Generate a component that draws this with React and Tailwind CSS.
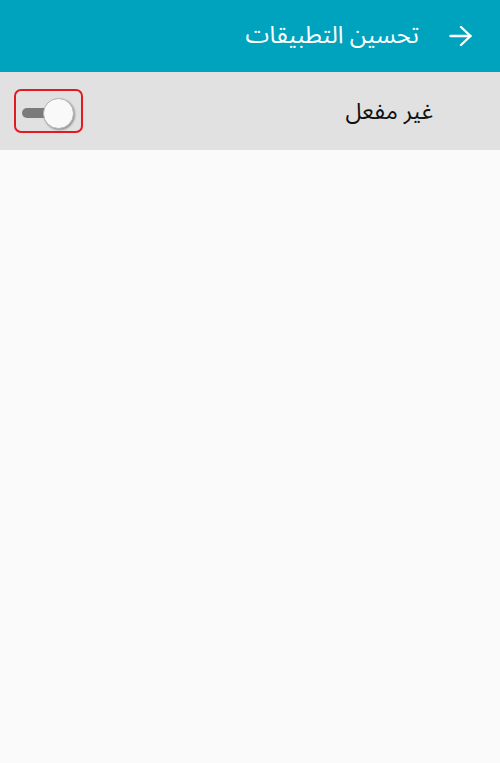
export default function App() {
  return (
    <div dir="rtl" className="w-[500px] h-[763px] bg-[#fafafa] flex flex-col" style={{ fontFamily: '"Noto Sans Arabic", "DejaVu Sans", "Noto Sans", sans-serif' }}>
      <div className="h-[72px] bg-[#00a3be] flex items-center shrink-0 pr-[28px]">
        <svg className="shrink-0" width="23" height="22" viewBox="0 0 23 22" fill="none" stroke="#ffffff" strokeWidth="2.4" strokeLinecap="round" strokeLinejoin="round">
          <path d="M1.5 11H21.5" />
          <path d="M12 2L21.5 11L12 20" />
        </svg>
        <span className="mr-[30px] text-[24px] text-white leading-none">تحسين التطبيقات</span>
      </div>
      <div className="h-[78px] bg-[#e1e1e1] flex items-center justify-between pr-[67px] pl-[14px] shrink-0">
        <span className="text-[23px] text-[#111111] leading-none">غير مفعل</span>
        <div className="w-[69px] h-[44px] border-2 border-[#e21b23] rounded-[7px] relative">
          <div className="absolute left-[6px] top-[17px] w-[28px] h-[10px] rounded-full bg-[#7b7b7b]" />
          <div className="absolute left-[27px] top-[7px] w-[31px] h-[31px] rounded-full bg-[#f9f9f9] border border-[#b5b5b5] shadow-[1px_1px_2px_rgba(0,0,0,0.35)]" />
        </div>
      </div>
      <div className="flex-1" />
    </div>
  );
}
